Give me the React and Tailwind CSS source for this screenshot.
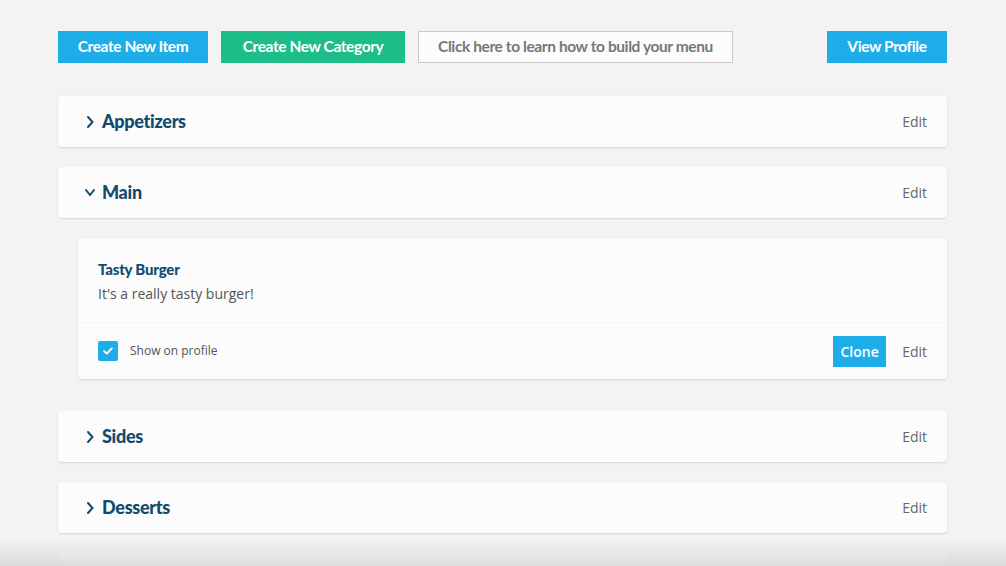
import React from "react";

const heading = { fontFamily: "Lato, 'Liberation Sans', sans-serif" };
const body = { fontFamily: "'Open Sans', 'Liberation Sans', sans-serif" };

function Chevron({ open }) {
  return (
    <svg width="10" height="14" viewBox="0 0 10 14" className="shrink-0">
      {open ? (
        <path d="M1 4 L5 9 L9 4" fill="none" stroke="#114b6e" strokeWidth="2" strokeLinecap="round" />
      ) : (
        <path d="M3 2 L7.5 7 L3 12" fill="none" stroke="#114b6e" strokeWidth="2" strokeLinecap="round" />
      )}
    </svg>
  );
}

function Category({ name, open }) {
  return (
    <div className="bg-[#fcfcfc] rounded-[4px] shadow-[0_1px_2px_rgba(0,0,0,0.12)] h-[51px] flex items-center pl-[27px] pr-[20px]">
      <div className="flex items-center gap-[7px] flex-1">
        {name && <Chevron open={open} />}
        <span style={heading} className="text-[18px] font-black tracking-[-0.3px] text-[#114b6e]">
          {name}
        </span>
      </div>
      {name && <span style={body} className="text-[14px] text-[#666]">Edit</span>}
    </div>
  );
}

function ItemCard() {
  return (
    <div className="ml-[20px] bg-[#fcfcfc] rounded-[4px] shadow-[0_1px_2px_rgba(0,0,0,0.12)]">
      <div className="px-[20px] pt-[21px] pb-[18px] border-b border-dotted border-[#eee]">
        <div style={heading} className="text-[15px] leading-[20px] font-black tracking-[-0.2px] text-[#114b6e]">Tasty Burger</div>
        <div style={body} className="text-[14px] leading-[20px] text-[#555] mt-[5px]">It's a really tasty burger!</div>
      </div>
      <div className="flex items-center px-[20px] h-[56px]">
        <div className="w-[20px] h-[20px] rounded-[2px] bg-[#1daeea] flex items-center justify-center">
          <svg width="10" height="8" viewBox="0 0 10 8">
            <path d="M1.2 4.2 L3.8 6.6 L8.8 1.4" fill="none" stroke="white" strokeWidth="1.9" strokeLinecap="round" strokeLinejoin="round" />
          </svg>
        </div>
        <span style={body} className="ml-[12px] text-[12px] text-[#555] flex-1">Show on profile</span>
        <button style={body} className="bg-[#1daeea] text-white text-[14px] font-semibold w-[53px] h-[31px] mr-[16px]">Clone</button>
        <span style={body} className="text-[14px] text-[#666]">Edit</span>
      </div>
    </div>
  );
}

export default function App() {
  return (
    <div className="relative h-[566px] overflow-hidden bg-[#f3f3f2]">
      <div className="w-[889px] ml-[58px] pt-[31px]">
        <div style={heading} className="flex items-center text-[15.5px] font-bold tracking-[-0.4px]">
          <button className="w-[150px] h-[32px] bg-[#1daeea] text-white">Create New Item</button>
          <button className="ml-[13px] w-[184px] h-[32px] bg-[#1dbd8a] text-white">Create New Category</button>
          <button className="ml-[13px] w-[315px] h-[32px] bg-[#fcfcfc] border border-[#c8c8c8] text-[#777]">
            Click here to learn how to build your menu
          </button>
          <div className="flex-1" />
          <button className="w-[120px] h-[32px] bg-[#1daeea] text-white">View Profile</button>
        </div>
        <div className="mt-[33px] flex flex-col">
          <Category name="Appetizers" />
          <div className="mt-[20px]"><Category name="Main" open /></div>
          <div className="mt-[20px]"><ItemCard /></div>
          <div className="mt-[32px]"><Category name="Sides" /></div>
          <div className="mt-[20px]"><Category name="Desserts" /></div>
          <div className="mt-[20px]"><Category name="" /></div>
        </div>
      </div>
      <div className="absolute left-0 right-0 bottom-0 h-[28px] bg-gradient-to-b from-transparent to-[#d9dcdb]" />
    </div>
  );
}
